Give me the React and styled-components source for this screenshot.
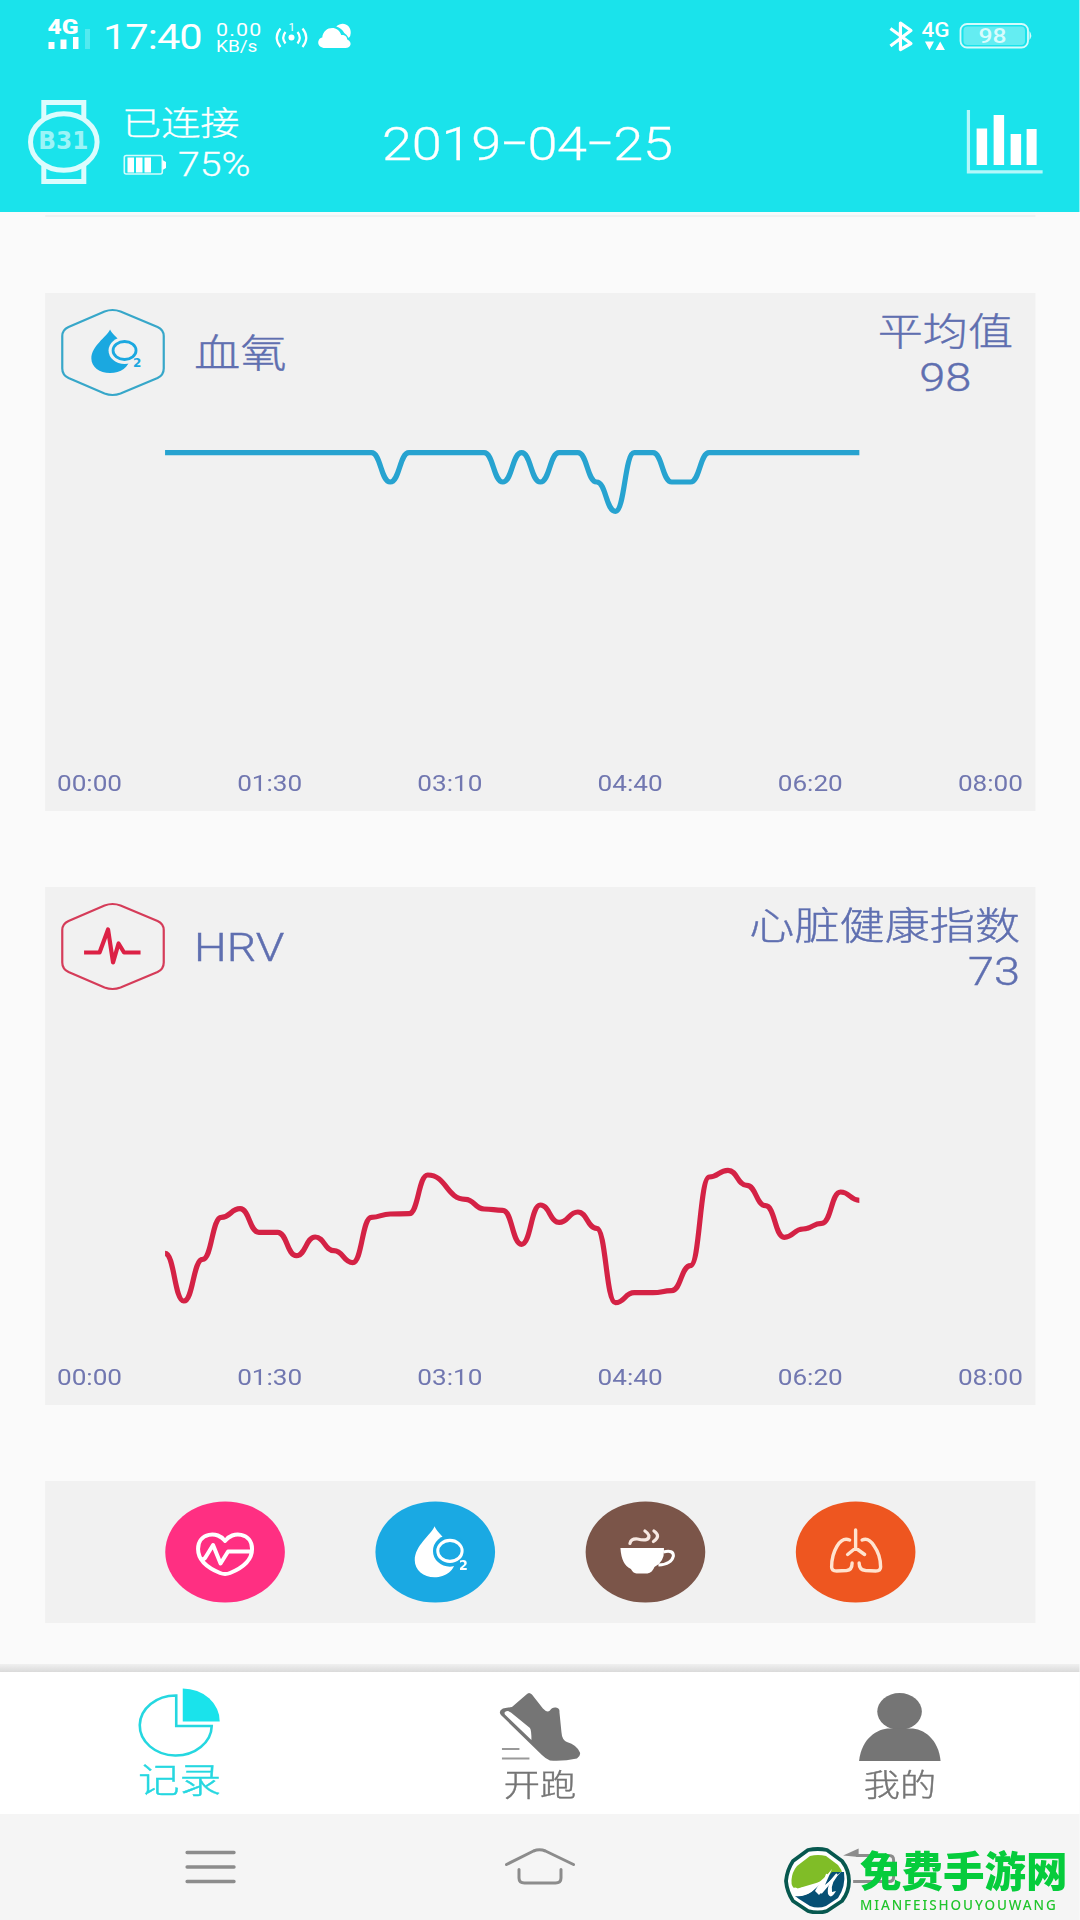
import styled, { createGlobalStyle } from 'styled-components';

// The phone canvas is wider than its design grid: everything inside Screen is
// laid out on the grid and stretched sideways once.
const STRETCH = 1.1875;
const px = (value) => `${(value / STRETCH).toFixed(2)}px`;

const GlobalStyle = createGlobalStyle`
  :root {
    --color-primary: #1ae3eb;
    --color-page: #fafafa;
    --color-card: #f1f1f1;
    --color-label: #5f6fb0;
    --color-muted: #757575;
    --color-blue: #1ba8e0;
    --color-red: #dc2145;
  }
  * {
    box-sizing: border-box;
  }
  body {
    margin: 0;
    background: var(--color-page);
    font-family: Roboto, 'Noto Sans CJK SC', sans-serif;
  }
`;

const Phone = styled.div`
  position: relative;
  width: 1080px;
  height: 1920px;
  overflow: hidden;
`;

const Screen = styled.div`
  width: ${px(1080)};
  height: 1920px;
  display: flex;
  flex-direction: column;
  transform: scaleX(${STRETCH});
  transform-origin: 0 0;
`;

const Art = styled.svg.attrs(({ $box }) => ({
  viewBox: $box.join(' '),
  preserveAspectRatio: 'none',
}))`
  display: block;
  flex: none;
  width: ${({ $box }) => px($box[2])};
  height: ${({ $box }) => $box[3]}px;
  overflow: visible;
`;

const Header = styled.header`
  height: 212px;
  flex: none;
  background: var(--color-primary);
  color: #fff;
`;

const StatusBar = styled.div`
  height: 74px;
  display: flex;
  align-items: center;
  padding: 0 ${px(47)};
`;

const Clock = styled.div`
  width: ${px(124)};
  padding: 2px 0 0 ${px(11)};
  font-size: 35px;
  line-height: 36px;
  letter-spacing: -0.8px;
`;

const Speed = styled.div`
  width: ${px(59)};
  padding-top: 1px;
  font-size: 18px;
  line-height: 17px;
  letter-spacing: 1px;
  span {
    display: block;
    letter-spacing: 0;
    font-size: 16px;
  }
`;

const StatusRight = styled.div`
  display: flex;
  align-items: center;
  margin-left: auto;
`;

const AppBar = styled.div`
  height: 138px;
  display: flex;
  align-items: center;
  padding: 0 ${px(37)} 2px ${px(27)};
`;

const Device = styled.div`
  width: ${px(260)};
  margin-left: ${px(22)};
  padding-top: 4px;
  font-size: 33px;
  font-weight: 300;
  line-height: 41px;
  -webkit-text-stroke: 0.3px;
`;

const Charge = styled.div`
  display: flex;
  align-items: center;
  gap: ${px(11)};
  padding-left: ${px(2)};
`;

const DateTitle = styled.h1`
  margin: 5px 0 0;
  font-size: 45.5px;
  font-weight: 300;
  line-height: 50px;
  letter-spacing: -0.2px;
  -webkit-text-stroke: 0.3px;
`;

const Dash = styled.span`
  display: inline-block;
  width: 22.3px;
  text-align: center;
  transform: translateY(-3px) scaleX(1.6);
`;

const ChartButton = styled.div`
  margin-left: auto;
`;

const Content = styled.main`
  flex: none;
  height: 1452px;
  padding: 0 ${px(45)};
`;

const PreviousCard = styled.div`
  height: 5px;
  margin-bottom: 76px;
  background: linear-gradient(#f6fbfb 3px, #f1f1f1 3px);
`;

const Card = styled.section`
  height: 518px;
  margin-bottom: 76px;
  display: flex;
  flex-direction: column;
  background: var(--color-card);
  color: var(--color-label);
`;

const CardHead = styled.div`
  height: 104px;
  display: flex;
  padding: 16px ${px(15)} 0 ${px(16)};
  -webkit-text-stroke: 0.4px;
`;

const CardTitle = styled.h2`
  margin: 23px 0 0 ${px(28)};
  font-size: 39px;
  font-weight: 300;
  line-height: 44px;
`;

const Summary = styled.div`
  margin: 1px ${({ $align }) => ($align === 'center' ? px(7) : '0')} 0 auto;
  font-size: 38px;
  font-weight: 300;
  line-height: 45px;
  text-align: ${({ $align }) => $align};
  span {
    font-size: 39.5px;
  }
`;

const Plot = styled.div`
  height: 364px;
  padding-left: ${px(120)};
`;

const Axis = styled.div`
  display: flex;
  justify-content: space-between;
  padding: 10px ${px(12)} 0;
  font-size: 22px;
  line-height: 26px;
  color: #7177b0;
`;

const Shortcuts = styled.nav`
  height: 142px;
  display: flex;
  justify-content: space-between;
  padding: 20px ${px(119)} 0 ${px(120)};
  background: var(--color-card);
`;

const TabBar = styled.nav`
  height: 150px;
  flex: none;
  display: flex;
  justify-content: space-between;
  padding: 0 ${px(139)} 0 ${px(138)};
  background: linear-gradient(#f0f0f0 0, #dadada 8px, #fff 8px);
`;

const Tab = styled.div`
  display: flex;
  flex-direction: column;
  align-items: center;
  padding-top: ${({ $active }) => ($active ? 24 : 29)}px;
  color: ${({ $active }) => ($active ? '#25d7e0' : 'var(--color-muted)')};
  font-size: ${({ $active }) => ($active ? 35 : 30.5)}px;
  font-weight: 300;
  line-height: ${({ $active }) => ($active ? 48 : 50)}px;
  -webkit-text-stroke: 0.4px;
`;

const SystemNav = styled.div`
  height: 106px;
  flex: none;
  display: flex;
  align-items: flex-start;
  justify-content: space-between;
  padding: 34px ${px(185)} 0 ${px(184)};
  background: #f5f5f5;
`;

const Watermark = styled.div`
  position: absolute;
  left: 784px;
  top: 1845px;
  display: flex;
  gap: 9px;
`;

const WatermarkText = styled.div`
  color: #06cc3c;
  font: 900 41.5px/48px 'Noto Sans CJK SC', sans-serif;
  white-space: nowrap;
  small {
    display: block;
    margin-top: 3px;
    font: 500 13.5px/18px 'Noto Sans', sans-serif;
    letter-spacing: 1.9px;
    color: #20c52c;
  }
`;

const hours = ['00:00', '01:30', '03:10', '04:40', '06:20', '08:00'];

const oxygen = Array(38).fill(452.7);
[12, 18, 20, 23, 27, 28].forEach((i) => (oxygen[i] = 482));
oxygen[24] = 511.3;

// null marks a slot without a reading
const hrv = [
  1253.3, 1301, 1259.3, 1217.3, 1208.7, 1232.3, 1232.3, 1255.7, 1237, 1250.7,
  1262.7, 1217.3, 1214, 1213.7, 1175, null, 1199.3, 1209, 1210.3, 1244.3,
  1205, 1222.3, 1212, 1228.3, 1302.7, 1292.7, 1292.7, 1290.7, 1265.7, 1177,
  1170.3, 1185.3, 1205.7, 1237.3, 1229, 1223.3, 1192, 1200.3,
];

// cubic line that is level at every reading
function smoothPath(values) {
  const step = 694.3 / (values.length - 1);
  const points = values
    .map((y, i) => [165 + i * step, y])
    .filter(([, y]) => y !== null);
  return points.reduce((d, [x, y], i) => {
    if (i === 0) return `M${x},${y}`;
    const [x0, y0] = points[i - 1];
    const mid = (x0 + x) / 2;
    return `${d}C${mid},${y0} ${mid},${y} ${x},${y}`;
  }, '');
}

function LineChart({ values, color, top }) {
  return (
    <Plot>
      <Art $box={[165, top, 695, 364]}>
        <path d={smoothPath(values)} fill="none" stroke={color} strokeWidth="5.200" />
      </Art>
    </Plot>
  );
}

function Hexagon({ color, children }) {
  return (
    <Art $box={[61, 309, 105, 88]}>
      <path
        d="M105 311.500Q113 308.500 121 311.500L158 327Q164.200 330 164.200 336V368.500Q164.200 375 158 378L121 393.500Q113 396.500 105 393.500L69 378Q62.700 375 62.700 368.500V336Q62.700 330 69 327Z"
        fill="none"
        stroke={color}
        strokeWidth="2.200"
      />
      {children}
    </Art>
  );
}

function OxygenMark({ color, back }) {
  return (
    <g>
      <path
        d="M110.500 329.500C107 337 91.800 346 91.800 358.500C91.800 367 100 373 110.500 373C121 373 130 367 130 358.500C130 346 114 337 110.500 329.500Z"
        fill={color}
      />
      <ellipse cx="125" cy="350.500" rx="16" ry="13.500" fill={back} />
      <ellipse cx="125" cy="350.500" rx="11.500" ry="9" fill="none" stroke={color} strokeWidth="2.800" />
      <text x="133.500" y="367" fill={color} fontSize="12" fontWeight="700" fontFamily="DejaVu Sans">2</text>
    </g>
  );
}

function HealthCard({ title, label, value, align, icon, children }) {
  return (
    <Card>
      <CardHead>
        {icon}
        <CardTitle>{title}</CardTitle>
        <Summary $align={align}>
          {label}
          <br />
          <span>{value}</span>
        </Summary>
      </CardHead>
      {children}
      <Axis>
        {hours.map((hour) => (
          <span key={hour}>{hour}</span>
        ))}
      </Axis>
    </Card>
  );
}

function Shortcut({ color, children }) {
  return (
    <Art $box={[0, 0, 120, 102]}>
      <ellipse cx="60" cy="51" rx="59.800" ry="50.500" fill={color} />
      {children}
    </Art>
  );
}

function StatusIcons() {
  return (
    <StatusBar>
      <Art $box={[47, 19, 45, 36]} fill="#fff">
        <text x="47" y="34" fontSize="19.500" fontWeight="900" textLength="31" lengthAdjust="spacingAndGlyphs">4G</text>
        <path d="M48 42h6v7h-6zM60 39.500h6v9.500h-6zM72.500 37h5.500v12h-5.500z" />
        <path d="M84.500 29h5v20h-5z" opacity=".25" />
      </Art>
      <Clock>17:40</Clock>
      <Speed>
        0.00
        <span>KB/s</span>
      </Speed>
      <Art $box={[275, 19, 43, 36]} fill="none" stroke="#fff" strokeWidth="2.200">
        <path d="M280 28.500Q272.500 37.500 280 47M285 32Q280.500 37.500 285 43.500M302 28.500Q309.500 37.500 302 47M297 32Q301.500 37.500 297 43.500" />
        <circle cx="291" cy="37.500" r="3" fill="#fff" stroke="none" />
        <text x="288" y="31.500" fontSize="11.500" fill="#fff" stroke="none">1</text>
      </Art>
      <Art $box={[318, 19, 33, 36]} fill="#fff">
        <path d="M336 26.500C342 20.500 351 24.500 350.500 33Q350.500 36 348.500 38Q346.500 34.500 344 33Q341.500 28 336 26.500Z" />
        <path d="M325 48C316 48 316.500 38.500 322 37.500C323 26 338 24.500 341 35C345 34.500 347 37 347 39.500C352 41.500 351.500 48 345 48Z" />
      </Art>
      <StatusRight>
        <Art $box={[889, 19, 71, 36]} fill="#fff">
          <path d="M890 28.500L910.500 43.500L900 49.500V23L910.500 30.500L890 46" fill="none" stroke="#fff" strokeWidth="3.200" strokeLinejoin="round" />
          <text x="921" y="37.500" fontSize="19.500" fontWeight="500" textLength="28" lengthAdjust="spacingAndGlyphs">4G</text>
          <path d="M924.500 41.500h9l-4.500 8.500zM935 50h9.500l-4.750-8.500z" />
        </Art>
        <Art $box={[960, 19, 73, 36]}>
          <rect x="961" y="24" width="67.500" height="23.500" rx="6.500" fill="none" stroke="#d5fbfc" strokeWidth="1.800" />
          <rect x="964" y="26.500" width="61.500" height="18.500" rx="4" fill="#64edf2" />
          <path d="M1030 31q3.500 4.500 0 9z" fill="#d5fbfc" />
          <text x="979" y="43" fontSize="21" fontWeight="500" fill="#d9fcfd" textLength="28" lengthAdjust="spacingAndGlyphs">98</text>
        </Art>
      </StatusRight>
    </StatusBar>
  );
}

function WatchIcon() {
  return (
    <Art $box={[27, 100, 73, 84]} fill="none" stroke="#dcfcfd">
      <path d="M43.500 120V102.500H83.500V120M43.500 164V181.500H83.500V164" strokeWidth="5" />
      <ellipse cx="63.500" cy="142" rx="33.300" ry="28.300" strokeWidth="5" />
      <text x="38" y="149.500" fontSize="24" fontWeight="700" fontFamily="DejaVu Sans" fill="#9cf4f7" stroke="none" textLength="50" lengthAdjust="spacingAndGlyphs">B31</text>
    </Art>
  );
}

function PieIcon() {
  return (
    <Art $box={[138, 1688, 83, 70]}>
      <path d="M176.500 1695.500V1726H212A36 30 0 1 1 176.500 1695.500Z" fill="none" stroke="#25d7e0" strokeWidth="2.600" />
      <path d="M183 1688.500A37 32.500 0 0 1 220 1721.500H183Z" fill="#1ae3eb" />
    </Art>
  );
}

function ShoeIcon() {
  return (
    <Art $box={[500, 1693, 81, 68]}>
      <path
        d="M526.500 1694.500Q529 1691.500 532 1694.500L543 1708.500Q547 1713 550 1710.500Q552 1707 556 1707.500Q560 1708 559.500 1712L561.500 1732Q562 1740 567 1742Q577 1745 580 1752.500Q581 1756 577 1758.500Q563 1761.500 550 1760.500Q546 1759 542 1755L501 1715Q498 1711 503 1708.500Q509 1707.500 512 1707Z"
        fill="#757575"
      />
      <path d="M505 1712Q508 1710 511 1712.500L530 1728Q531.500 1730 531.500 1740L505.500 1715Q504 1713.500 505 1712Z" fill="#fff" />
      <path d="M502 1749h17.500M502 1758.500h27.500" stroke="#999" strokeWidth="1.800" />
    </Art>
  );
}

function Logo() {
  return (
    <svg width="67" height="69" viewBox="784 1845 67 69">
      <path
        d="M808 1850Q818 1848 827 1850L842 1861Q849 1870 849 1881Q849 1892 842 1901L827 1911Q818 1914 808 1911L793 1901Q787 1892 786 1881Q787 1870 793 1861Z"
        fill="#fff"
        stroke="#07584f"
        strokeWidth="3.800"
        strokeLinejoin="round"
      />
      <path d="M810 1856Q818 1854 826 1856L838 1865Q842 1870 843 1875L796 1889Q791 1888 791.500 1880Q792 1872 797 1866Z" fill="#80bd27" />
      <path d="M795 1896Q807 1897 817 1887L832 1872L844 1872Q846 1886 838 1898L826 1906Q818 1909 810 1906L799 1899Z" fill="#075074" />
      <path
        d="M791 1889Q796 1886 798 1889Q804 1886 807 1888Q821 1884 832 1869L825 1885Q835 1877 842 1871Q830 1882 832 1892L836 1891Q831 1900 828 1894Q827 1888 830 1883L819 1895L815 1891L822 1879Q812 1898 795 1896Z"
        fill="#fff"
      />
      <path d="M820 1893L827 1874M821 1893L837 1874" stroke="#fff" strokeWidth="2" />
    </svg>
  );
}

export default function App() {
  return (
    <Phone>
      <GlobalStyle />
      <Screen>
        <Header>
          <StatusIcons />
          <AppBar>
            <WatchIcon />
            <Device>
              已连接
              <Charge>
                <Art $box={[124, 152, 43, 22]}>
                  <rect x="124.800" y="153.500" width="38" height="18.500" rx="2" fill="none" stroke="#d5fbfc" strokeWidth="1.600" />
                  <path d="M128 155.500h6.500v15h-6.500zM136.500 155.500h6.500v15h-6.500zM145 155.500h6.500v15h-6.500zM163 158l3.500 2v6l-3.500 2z" fill="#fff" />
                </Art>
                75%
              </Charge>
            </Device>
            <DateTitle>
              2019<Dash>-</Dash>04<Dash>-</Dash>25
            </DateTitle>
            <ChartButton>
              <Art $box={[967, 109, 76, 64]}>
                <path d="M968.800 109V170.800H1043" fill="none" stroke="#b4f7fa" strokeWidth="3.200" />
                <path d="M977 127.500h10.500v36.500h-10.500zM994 114h10.500v50h-10.500zM1011 133h10.500v31h-10.500zM1027 128h10v36h-10z" fill="#fff" />
              </Art>
            </ChartButton>
          </AppBar>
        </Header>
        <Content>
          <PreviousCard />
          <HealthCard
            title="血氧"
            label="平均值"
            value="98"
            align="center"
            icon={
              <Hexagon color="#37a7c9">
                <OxygenMark color="#1ba8e0" back="#f1f1f1" />
              </Hexagon>
            }
          >
            <LineChart values={oxygen} color="#27a3d0" top={397} />
          </HealthCard>
          <HealthCard
            title="HRV"
            label="心脏健康指数"
            value="73"
            align="right"
            icon={
              <Hexagon color="#d53c59">
                <path d="M84.500 358.500H100L108.500 335.500L113.500 368.500L119 349.500L124.500 358.500H141" fill="none" stroke="#dc2145" strokeWidth="4.200" strokeLinejoin="round" />
              </Hexagon>
            }
          >
            <LineChart values={hrv} color="#d42245" top={991} />
          </HealthCard>
          <Shortcuts>
            <Shortcut color="#ff2f82">
              <path
                d="M60 40C53 29.500 33 31.500 33 48C33 60 44 67.500 55 72Q60 74 65 72C76 67.500 87 60 87 48C87 31.500 67 29.500 60 40ZM37 59L40 57L48 44L55.500 62.500L63 50.500H87"
                fill="none"
                stroke="#fff"
                strokeWidth="4"
                strokeLinejoin="round"
              />
            </Shortcut>
            <Shortcut color="#1aa9e3">
              <g transform="translate(-57.800 -360.200) scale(1.060 1.170)">
                <OxygenMark color="#fff" back="#1aa9e3" />
              </g>
            </Shortcut>
            <Shortcut color="#7b5549">
              <path d="M35 47H78.500V49.500Q79 61 69 66Q67 71.500 62 72.500H51Q47.500 72 45.500 68Q36 64 35 47Z" fill="#fff" />
              <path d="M78 51Q88 48.500 88 55Q86 63.500 73 64" fill="none" stroke="#fff" strokeWidth="3" />
              <path d="M44.500 42.500Q45.500 37.500 52 38Q64 41 63.500 34.500Q62.500 32 59.500 30M68.500 30Q76 35 68 40.500" fill="none" stroke="#f7e9e3" strokeWidth="3.200" strokeLinecap="round" />
            </Shortcut>
            <Shortcut color="#ee5620">
              <path
                d="M60 29V47L52 53.500M60 47L69 53.500M54 39Q47 36 41.500 45Q36 54 36 66Q36 70 41 70L51 69.500Q56.500 69 56.500 62M66.500 39Q73 36 78.500 45Q85 54 85 66Q85 70 80 70L70 69.500Q63.500 69 63.500 62"
                fill="none"
                stroke="#ffe3cf"
                strokeWidth="3.400"
                strokeLinecap="round"
              />
            </Shortcut>
          </Shortcuts>
        </Content>
        <TabBar>
          <Tab $active>
            <PieIcon />
            记录
          </Tab>
          <Tab>
            <ShoeIcon />
            开跑
          </Tab>
          <Tab>
            <Art $box={[859, 1693, 82, 68]} fill="#757575">
              <ellipse cx="900" cy="1711.500" rx="22.300" ry="18.500" />
              <path d="M859.500 1761C862 1738 878 1728.500 890 1728.500H911C924 1728.500 939 1739 941 1761Z" />
            </Art>
            我的
          </Tab>
        </TabBar>
        <SystemNav>
          <Art $box={[185, 1848, 52, 37]}>
            <path d="M188 1852.500H235M188 1867H235M188 1881.500H235" stroke="#8c8c8c" strokeWidth="3.300" strokeLinecap="round" />
          </Art>
          <Art $box={[505, 1848, 71, 37]} fill="none" stroke="#8c8c8c" strokeWidth="3" strokeLinecap="round">
            <path d="M508 1864.500L535 1851Q541 1848.500 547 1851L575 1864.500M520.500 1869.500V1878Q520.500 1883 526 1883H557Q562.500 1883 562.500 1878V1869.500" />
          </Art>
          <Art $box={[843, 1848, 52, 37]}>
            <path d="M856 1855.500H889Q893.500 1855.500 893.500 1860V1877Q893.500 1881.500 889 1881.500H853" fill="none" stroke="#8c8c8c" strokeWidth="3" />
            <path d="M843 1855.500L858.500 1848.500V1857Z" fill="#8c8c8c" />
          </Art>
        </SystemNav>
      </Screen>
      <Watermark>
        <Logo />
        <WatermarkText>
          免费手游网
          <small>MIANFEISHOUYOUWANG</small>
        </WatermarkText>
      </Watermark>
    </Phone>
  );
}
